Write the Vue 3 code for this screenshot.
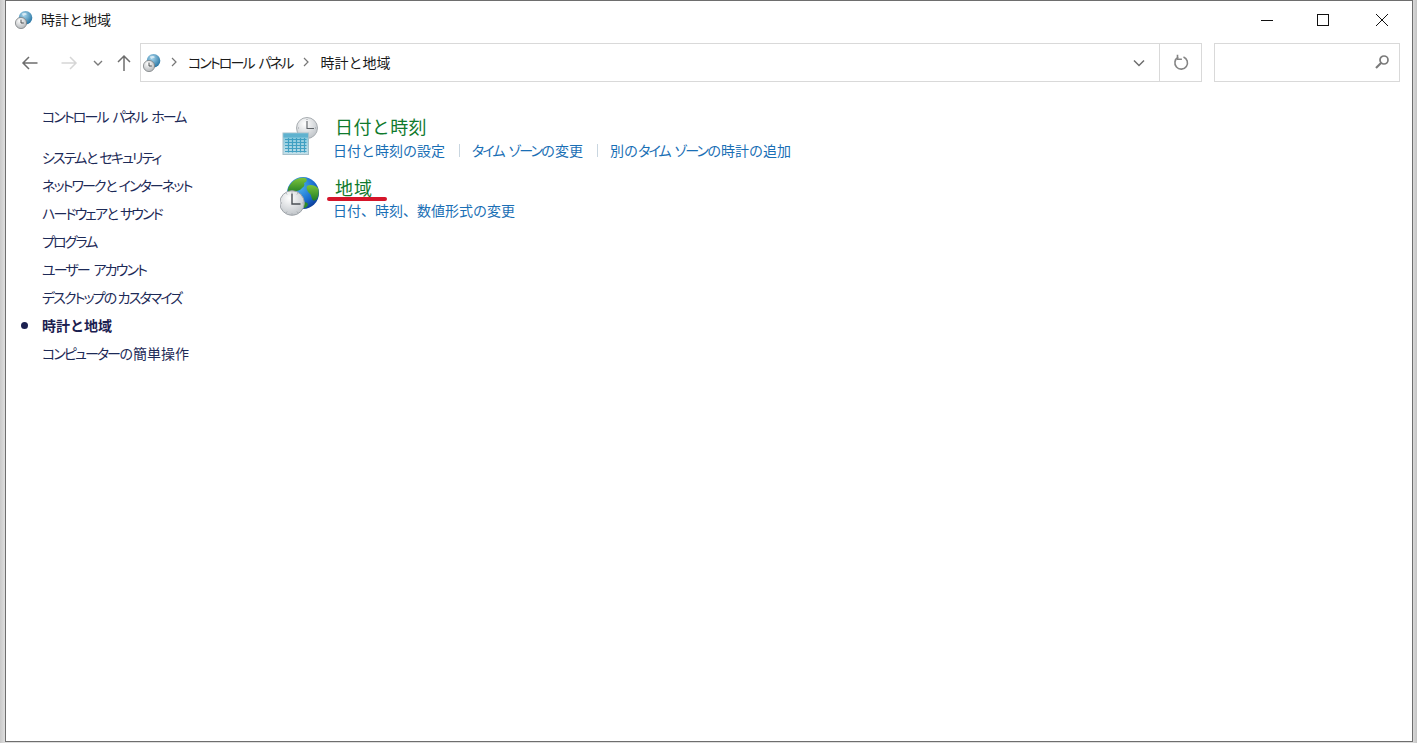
<script setup>
const sideTop = 'コントロール パネル ホーム'
const sideItems = [
  { label: 'システムとセキュリティ' },
  { label: 'ネットワークとインターネット' },
  { label: 'ハードウェアとサウンド' },
  { label: 'プログラム' },
  { label: 'ユーザー アカウント' },
  { label: 'デスクトップのカスタマイズ' },
  { label: '時計と地域', active: true },
  { label: 'コンピューターの簡単操作' }
]
const dateLinks = ['日付と時刻の設定', 'タイム ゾーンの変更', '別のタイム ゾーンの時計の追加']
// Katakana runs are set proportionally, kanji and kana stay full width.
const runs = (s) =>
  s.split(/([\u30A0-\u30FF ]+)/).filter(Boolean).map((text) => ({
    text,
    kata: /^[\u30A0-\u30FF ]+$/.test(text)
  }))
</script>

<template>
  <div class="desktop">
    <div class="window">
      <header class="titlebar">
        <svg class="title-icon" width="20" height="20" viewBox="0 0 20 20">
          <defs>
            <radialGradient id="tg" cx="40%" cy="30%" r="75%">
              <stop offset="0" stop-color="#a9d6ec" />
              <stop offset="1" stop-color="#1f6f9f" />
            </radialGradient>
            <radialGradient id="tc" cx="40%" cy="30%" r="80%">
              <stop offset="0" stop-color="#ffffff" />
              <stop offset="1" stop-color="#a9adb0" />
            </radialGradient>
          </defs>
          <circle cx="11.5" cy="7.8" r="6.8" fill="url(#tg)" />
          <path d="M8 3.5c2-1 4-.6 5 .6-1 1.4-3 .8-3.6 2-.6-.8-1.4-1.6-1.4-2.6z" fill="#d6e9f3" />
          <circle cx="7" cy="13" r="5.6" fill="url(#tc)" stroke="#7d8184" stroke-width=".8" />
          <path d="M7 9.6V13h2.8" fill="none" stroke="#3d4144" stroke-width=".9" />
        </svg>
        <span class="title-text">時計と地域</span>
        <div class="win-controls">
          <svg class="ctl" width="58" height="38" viewBox="0 0 58 38"><path d="M24 19.5h12" stroke="#111" /></svg>
          <svg class="ctl" width="58" height="38" viewBox="0 0 58 38"><rect x="23.5" y="13.5" width="11" height="11" fill="none" stroke="#111" /></svg>
          <svg class="ctl" width="58" height="38" viewBox="0 0 58 38"><path d="M23 13l12 12M35 13L23 25" stroke="#111" fill="none" /></svg>
        </div>
      </header>

      <nav class="toolbar">
        <div class="nav-buttons">
          <svg width="20" height="20" viewBox="0 0 20 20"><path d="M17.5 10H3M9 4l-6 6 6 6" fill="none" stroke="#6d6d6d" stroke-width="1.5" /></svg>
          <svg class="gap-fwd" width="20" height="20" viewBox="0 0 20 20"><path d="M2.5 10H17M11 4l6 6-6 6" fill="none" stroke="#d6d6d6" stroke-width="1.5" /></svg>
          <svg class="gap-down" width="12" height="12" viewBox="0 0 12 12"><path d="M2 4l4 4 4-4" fill="none" stroke="#7a7a7a" stroke-width="1.4" /></svg>
          <svg class="gap-up" width="20" height="20" viewBox="0 0 20 20"><path d="M10 18V3M4 9l6-6 6 6" fill="none" stroke="#6d6d6d" stroke-width="1.5" /></svg>
        </div>
        <div class="address">
          <svg class="addr-icon" width="20" height="20" viewBox="0 0 20 20">
            <circle cx="11.5" cy="7.8" r="6.8" fill="url(#tg)" />
            <path d="M8 3.5c2-1 4-.6 5 .6-1 1.4-3 .8-3.6 2-.6-.8-1.4-1.6-1.4-2.6z" fill="#d6e9f3" />
            <circle cx="7" cy="13" r="5.6" fill="url(#tc)" stroke="#7d8184" stroke-width=".8" />
            <path d="M7 9.6V13h2.8" fill="none" stroke="#3d4144" stroke-width=".9" />
          </svg>
          <svg class="crumb-sep first" width="8" height="10" viewBox="0 0 8 10"><path d="M2 1l4 4-4 4" fill="none" stroke="#777" stroke-width="1.2" /></svg>
          <span class="crumb"><span v-for="r in runs('コントロール パネル')" :key="r.text" :class="{ kata: r.kata }">{{ r.text }}</span></span>
          <svg class="crumb-sep" width="8" height="10" viewBox="0 0 8 10"><path d="M2 1l4 4-4 4" fill="none" stroke="#777" stroke-width="1.2" /></svg>
          <span class="crumb">時計と地域</span>
          <div class="addr-drop">
            <svg width="14" height="10" viewBox="0 0 14 10"><path d="M2 2.5l5 5 5-5" fill="none" stroke="#6d6d6d" stroke-width="1.5" /></svg>
          </div>
          <div class="addr-refresh">
            <svg width="18" height="18" viewBox="0 0 18 18"><path d="M6.2 3.3A6.3 6.3 0 1 0 11.5 3" fill="none" stroke="#858585" stroke-width="1.6" /><path d="M5.5 0.8v4.4h4.4" fill="none" stroke="#858585" stroke-width="1.6" /></svg>
          </div>
        </div>
        <div class="search">
          <svg width="16" height="16" viewBox="0 0 16 16"><circle cx="10" cy="6" r="4" fill="none" stroke="#7a7a7a" stroke-width="1.7" /><path d="M7 9l-5 5" stroke="#7a7a7a" stroke-width="2.2" /></svg>
        </div>
      </nav>

      <div class="content">
        <aside class="sidebar">
          <a class="side-link side-home"><span v-for="r in runs(sideTop)" :key="r.text" :class="{ kata: r.kata }">{{ r.text }}</span></a>
          <a v-for="item in sideItems" :key="item.label" class="side-link" :class="{ active: item.active }"><span v-for="r in runs(item.label)" :key="r.text" :class="{ kata: r.kata }">{{ r.text }}</span></a>
        </aside>
        <main class="main">
          <section class="item">
            <svg class="item-icon" width="42" height="42" viewBox="0 0 42 42">
              <defs>
                <linearGradient id="cal" x1="0" y1="0" x2="0" y2="1">
                  <stop offset="0" stop-color="#7cc4da" />
                  <stop offset="1" stop-color="#c4e0ea" />
                </linearGradient>
                <radialGradient id="face" cx="40%" cy="30%" r="80%">
                  <stop offset="0" stop-color="#ffffff" />
                  <stop offset="1" stop-color="#b9bec3" />
                </radialGradient>
              </defs>
              <circle cx="27" cy="12" r="10.5" fill="url(#face)" stroke="#a8adb1" />
              <path d="M27 5V12.5H34" fill="none" stroke="#5b6065" stroke-width="1.1" />
              <path d="M27 3v1M27 20v1M18 12h1M35 12h1" stroke="#9a9fa4" />
              <rect x="3" y="17" width="25.5" height="21.5" fill="url(#cal)" stroke="#a7c0ca" />
              <rect x="3.5" y="17.5" width="24.5" height="4" fill="#5fb2cf" />
              <path d="M5 23.5h21.5M5 26.5h21.5M5 29.5h21.5M5 32.5h21.5M5 35.5h21.5M8.5 22v14.5M12.5 22v14.5M16.5 22v14.5M20.5 22v14.5M24.5 22v14.5" stroke="#2f97bd" stroke-width="1.2" opacity=".85" />
            </svg>
            <div class="item-body">
              <h2 class="item-title">日付と時刻</h2>
              <div class="item-links">
                <a v-for="(l, i) in dateLinks" :key="l" class="link" :class="{ sep: i > 0 }"><span v-for="r in runs(l)" :key="r.text + r.kata" :class="{ kata: r.kata }">{{ r.text }}</span></a>
              </div>
            </div>
          </section>
          <section class="item">
            <svg class="item-icon" width="42" height="42" viewBox="0 0 42 42">
              <defs>
                <radialGradient id="globe" cx="38%" cy="30%" r="78%">
                  <stop offset="0" stop-color="#4fb4ee" />
                  <stop offset=".6" stop-color="#1b6fd0" />
                  <stop offset="1" stop-color="#0a3590" />
                </radialGradient>
                <linearGradient id="land" x1="0" y1="0" x2="0" y2="1">
                  <stop offset="0" stop-color="#7cc43a" />
                  <stop offset="1" stop-color="#1f7d25" />
                </linearGradient>
              </defs>
              <circle cx="23" cy="17" r="16" fill="url(#globe)" />
              <path d="M10 9c3-5 9-8 15-7 3 1 2 4-1 5 1 2 0 4-2 5-2 3-6 3-9 4-2 1-5 2-5 1-.5-3 0-6 2-8z" fill="url(#land)" />
              <path d="M27 10c3-2 8-1 11 2 1 3 1 7-1 11-2 2-4 2-5 0-1-3-1-5-3-6-2-2-3-5-2-7z" fill="url(#land)" />
              <path d="M22 27c2-1 5-1 6 1 0 2-2 4-4 4-1-1-2-3-2-5z" fill="#2c8b2a" />
              <circle cx="12" cy="27" r="12.3" fill="url(#face)" stroke="#9ea3a8" />
              <path d="M12 17.5V28H20.5" fill="none" stroke="#4a4f54" stroke-width="1.4" />
              <path d="M12 15.5v1M12 37.5v1M1 27h1M22.5 27h1M6.5 17.5l.5.8M17.5 17.5l-.5.8M6.5 36.5l.5-.8M17.5 36.5l-.5-.8" stroke="#9a9fa4" />
            </svg>
            <div class="item-body">
              <h2 class="item-title second">地域</h2>
              <div class="item-links">
                <a class="link">日付、時刻、数値形式の変更</a>
              </div>
              <span class="red-mark"></span>
            </div>
          </section>
        </main>
      </div>
    </div>
  </div>
</template>

<style>
html, body { margin: 0; padding: 0; overflow: hidden; }
</style>

<style scoped>
.desktop {
  width: 1417px;
  height: 743px;
  box-sizing: border-box;
  padding: 0 4px 1px 5px;
  background: linear-gradient(90deg, #c9c9c9 0, #dedede 5px, #dedede 1412px, #c4c4c4 1417px);
  font-family: "Noto Sans CJK JP", "Noto Sans", sans-serif;
  font-size: 14px;
}
.kata {
  font-feature-settings: "palt";
  letter-spacing: -1.9px;
  word-spacing: 3.5px;
}
.window {
  height: 100%;
  box-sizing: border-box;
  border: 1px solid #6e6e6e;
  background: #fff;
  display: flex;
  flex-direction: column;
}
.titlebar {
  height: 38px;
  flex: none;
  display: flex;
  align-items: center;
  padding-left: 8px;
}
.title-icon { flex: none; }
.title-text { margin: 0 0 2px 7px; color: #1a1a1a; font-size: 14px; }
.win-controls { margin-left: auto; display: flex; gap: 0; padding-right: 1px; }
.ctl { display: block; }
.ctl:nth-child(2) { margin-left: -1px; margin-right: 1px; }
.toolbar {
  height: 39px;
  margin-top: 4px;
  flex: none;
  display: flex;
  align-items: center;
  padding-right: 12px;
}
.nav-buttons { width: 134px; flex: none; display: flex; align-items: center; padding-left: 14px; box-sizing: border-box; }
.gap-fwd { margin-left: 19px; }
.gap-down { margin-left: 13px; }
.gap-up { margin-left: 10px; }
.address {
  flex: 1;
  height: 39px;
  box-sizing: border-box;
  border: 1px solid #d9d9d9;
  display: flex;
  align-items: center;
  padding-left: 1px;
  color: #1a1a1a;
}
.crumb-sep { flex: none; margin: 0 10px 2px 10px; }
.crumb-sep.first { margin: 0 10px 2px 8px; }
.crumb { white-space: nowrap; padding-bottom: 2px; }
.addr-drop { margin-left: auto; width: 42px; height: 100%; display: flex; align-items: center; justify-content: center; padding-left: 2px; box-sizing: border-box; }
.addr-refresh { width: 41px; height: 100%; border-left: 1px solid #d9d9d9; display: flex; align-items: center; justify-content: center; }
.search {
  width: 186px;
  height: 39px;
  margin-left: 12px;
  flex: none;
  box-sizing: border-box;
  border: 1px solid #d9d9d9;
  display: flex;
  align-items: center;
  justify-content: flex-end;
  padding: 0 9px 2px 0;
}
.content { flex: 1; display: flex; padding-top: 20px; }
.sidebar { width: 274px; flex: none; display: flex; flex-direction: column; }
.side-link {
  height: 28px;
  line-height: 28px;
  padding-left: 36px;
  color: #1d2a57;
  white-space: nowrap;
  position: relative;
}
.side-home { margin-bottom: 13px; }
.active { font-weight: 700; color: #1b2050; }
.active::before {
  content: "";
  position: absolute;
  left: 15px;
  top: 11px;
  width: 7px;
  height: 7px;
  border-radius: 50%;
  background: #1b2050;
}
.main { flex: 1; padding-top: 14px; display: flex; flex-direction: column; gap: 18px; }
.item { display: flex; height: 42px; }
.item-icon { flex: none; display: block; filter: blur(.35px); }
.item-body { margin: -2px 0 0 13px; position: relative; }
.item-title {
  margin: 0;
  height: 24px;
  line-height: 24px;
  font-size: 18px;
  font-weight: 400;
  letter-spacing: .4px;
  color: #0f7a2d;
}
.item-title.second { padding-top: 1px; height: 23px; letter-spacing: 1px; }
.item-links { display: flex; height: 24px; line-height: 24px; white-space: nowrap; margin-left: -2px; }
.link { color: #1a6fb5; }
.link.sep { margin-left: 14px; padding-left: 13px; position: relative; }
.link.sep::before {
  content: "";
  position: absolute;
  left: 0;
  top: 6px;
  height: 13px;
  border-left: 1px solid #c9d6e0;
}
.red-mark {
  position: absolute;
  left: -8px;
  top: 23px;
  width: 60px;
  height: 4px;
  border-radius: 2px;
  background: #d5152a;
}
</style>
